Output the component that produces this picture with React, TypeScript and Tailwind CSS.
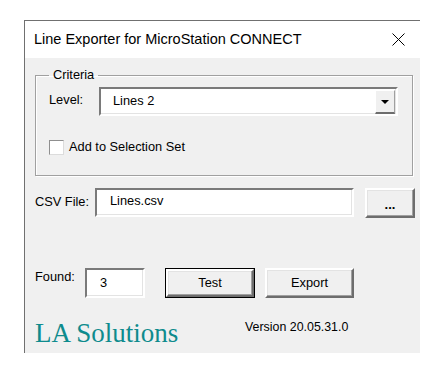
import React from 'react';

const sunken =
  "border-2 border-t-[#7a7a7a] border-l-[#7a7a7a] border-b-white border-r-white bg-white shadow-[inset_-1px_-1px_0_#e3e3e3]";
const raised =
  "border-2 border-t-white border-l-white border-b-[#6d6d6d] border-r-[#6d6d6d] bg-[#f0f0f0] shadow-[inset_-1px_-1px_0_#a0a0a0,inset_1px_1px_0_#e3e3e3]";

function CloseIcon() {
  return (
    <svg width="13" height="13" viewBox="0 0 13 13" className="block">
      <path d="M0.5 0.5 L12.5 12.5 M12.5 0.5 L0.5 12.5" stroke="#000" strokeWidth="1" fill="none" />
    </svg>
  );
}

export default function App() {
  return (
    <div className="w-[444px] h-[378px] bg-white pt-[20px] pl-[24px]" style={{ fontFamily: '"Liberation Sans", Arial, sans-serif' }}>
      <div className="w-[396px] h-[333px] border-t border-l border-[#707070] bg-[#f0f0f0] flex flex-col">
        {/* title bar */}
        <div className="h-[37px] bg-white flex items-center justify-between pl-[9px] pr-[15px] shrink-0">
          <span className="text-[14.5px] text-black leading-none">Line Exporter for MicroStation CONNECT</span>
          <CloseIcon />
        </div>

        <div className="flex flex-col pl-[10px] text-[12.8px] text-black">
          {/* Criteria group */}
          <fieldset className="mt-[9px] w-[377px] border border-[#a0a0a0] shadow-[1px_1px_0_#fff,inset_1px_1px_0_#fff] pl-[13px] pr-[14px] pt-[4px] pb-[20px] m-0">
            <legend className="px-[4px] leading-[16px]">Criteria</legend>
            <div className="flex items-start">
              <span className="w-[50px] mt-[5px] leading-[16px]">Level:</span>
              <div className={`${sunken} w-[299px] h-[29px] flex items-start justify-between`}>
                <span className="pl-[12px] pt-[4px] leading-[16px]">Lines 2</span>
                <div className="mt-[1px] mr-[1px] w-[20px] h-[24px] border-t border-l border-white border-b-2 border-b-[#6d6d6d] border-r border-r-[#a0a0a0] bg-[#f0f0f0] flex items-center justify-center">
                  <svg width="8" height="4" viewBox="0 0 8 4" className="block mt-[1px]">
                    <path d="M0 0 H8 L4 4 Z" fill="#000" />
                  </svg>
                </div>
              </div>
            </div>
            <div className="flex items-center mt-[23px]">
              <div className="w-[15px] h-[15px] bg-white border border-t-[#8f8f8f] border-l-[#8f8f8f] border-b-[#dcdcdc] border-r-[#dcdcdc]" />
              <span className="ml-[5px] leading-[16px]">Add to Selection Set</span>
            </div>
          </fieldset>

          {/* CSV row */}
          <div className="flex items-start mt-[12px]">
            <span className="w-[60px] mt-[6px] leading-[16px]">CSV File:</span>
            <div className={`${sunken} w-[259px] h-[29px] pl-[13px] pt-[3px] leading-[16px]`}>Lines.csv</div>
            <button className={`${raised} ml-[11px] w-[50px] h-[30px] flex items-end justify-center pb-[3px] font-bold text-[13px] leading-[16px]`}>...</button>
          </div>

          {/* Found row */}
          <div className="flex items-start mt-[50px]">
            <span className="w-[50px] mt-[1px] leading-[16px]">Found:</span>
            <div className={`${sunken} w-[60px] h-[30px] pl-[13px] pt-[5px] leading-[16px]`}>3</div>
            <div className="ml-[20px] w-[90px] h-[30px] border border-black">
              <div className={`${raised} w-full h-full flex items-center justify-center leading-[16px]`}>Test</div>
            </div>
            <button className={`${raised} ml-[10px] w-[89px] h-[30px] flex items-center justify-center leading-[16px]`}>Export</button>
          </div>

          {/* footer */}
          <div className="flex items-start mt-[22px]">
            <span
              className="w-[210px] text-[27px] leading-none text-[#0e8b8d]"
              style={{ fontFamily: '"Liberation Serif", "Times New Roman", serif' }}
            >
              LA Solutions
            </span>
            <span className="mt-[0px] text-[12.4px] leading-[14px]">Version 20.05.31.0</span>
          </div>
        </div>
      </div>
    </div>
  );
}
